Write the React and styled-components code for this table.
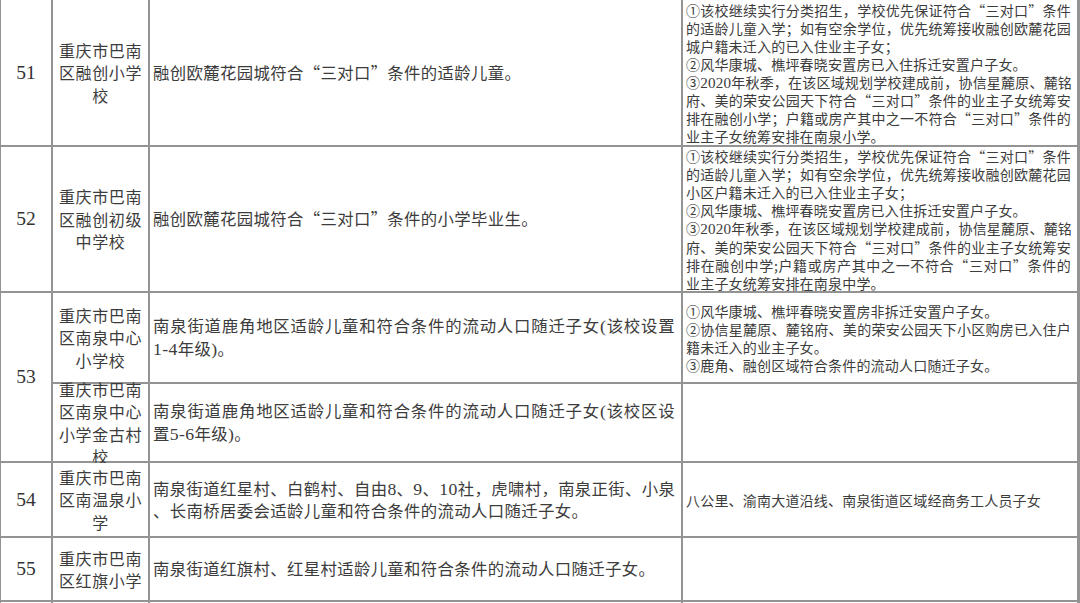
import React from "react";
import styled, { createGlobalStyle } from "styled-components";

const GlobalStyle = createGlobalStyle`
  html, body {
    margin: 0;
    padding: 0;
    background: #fff;
    overflow: hidden;
  }
  body {
    font-family: "Noto Sans CJK SC", "Liberation Serif", sans-serif;
    color: #3c3c3c;
  }
`;

const rows = [
  {
    no: "51",
    school: "重庆市巴南区融创小学校",
    area: [{ t: "融创欧麓花园城符合“三对口”条件的适龄儿童。" }],
    note: [
      { t: "①该校继续实行分类招生，学校优先保证符合“三对口”条件", j: true },
      { t: "的适龄儿童入学；如有空余学位，优先统筹接收融创欧麓花园", j: true },
      { t: "城户籍未迁入的已入住业主子女；" },
      { t: "②风华康城、樵坪春晓安置房已入住拆迁安置户子女。" },
      { t: "③2020年秋季，在该区域规划学校建成前，协信星麓原、麓铭", j: true },
      { t: "府、美的荣安公园天下符合“三对口”条件的业主子女统筹安", j: true },
      { t: "排在融创小学；户籍或房产其中之一不符合“三对口”条件的", j: true },
      { t: "业主子女统筹安排在南泉小学。" },
    ],
  },
  {
    no: "52",
    school: "重庆市巴南区融创初级中学校",
    area: [{ t: "融创欧麓花园城符合“三对口”条件的小学毕业生。" }],
    note: [
      { t: "①该校继续实行分类招生，学校优先保证符合“三对口”条件", j: true },
      { t: "的适龄儿童入学；如有空余学位，优先统筹接收融创欧麓花园", j: true },
      { t: "小区户籍未迁入的已入住业主子女；" },
      { t: "②风华康城、樵坪春晓安置房已入住拆迁安置户子女。" },
      { t: "③2020年秋季，在该区域规划学校建成前，协信星麓原、麓铭", j: true },
      { t: "府、美的荣安公园天下符合“三对口”条件的业主子女统筹安", j: true },
      { t: "排在融创中学;户籍或房产其中之一不符合“三对口”条件的", j: true },
      { t: "业主子女统筹安排在南泉中学。" },
    ],
  },
  {
    no: "53",
    span: 2,
    school: "重庆市巴南区南泉中心小学校",
    area: [
      { t: "南泉街道鹿角地区适龄儿童和符合条件的流动人口随迁子女(该校设置", j: true },
      { t: "1-4年级)。" },
    ],
    note: [
      { t: "①风华康城、樵坪春晓安置房非拆迁安置户子女。" },
      { t: "②协信星麓原、麓铭府、美的荣安公园天下小区购房已入住户", j: true },
      { t: "籍未迁入的业主子女。" },
      { t: "③鹿角、融创区域符合条件的流动人口随迁子女。" },
    ],
  },
  {
    school: "重庆市巴南区南泉中心小学金古村校",
    area: [
      { t: "南泉街道鹿角地区适龄儿童和符合条件的流动人口随迁子女(该校区设", j: true },
      { t: "置5-6年级)。" },
    ],
    note: [],
  },
  {
    no: "54",
    school: "重庆市巴南区南温泉小学",
    area: [
      { t: "南泉街道红星村、白鹤村、自由8、9、10社，虎啸村，南泉正街、小泉", j: true },
      { t: "、长南桥居委会适龄儿童和符合条件的流动人口随迁子女。" },
    ],
    note: [{ t: "八公里、渝南大道沿线、南泉街道区域经商务工人员子女" }],
  },
  {
    no: "55",
    school: "重庆市巴南区红旗小学",
    area: [{ t: "南泉街道红旗村、红星村适龄儿童和符合条件的流动人口随迁子女。" }],
    note: [],
  },
  {
    no: "56",
    school: "重庆市巴南区花溪小学校",
    area: [],
    note: [],
    top: true,
  },
];

// latin runs (digits, hyphens, brackets) get the serif face like the print
function rich(str) {
  return str.split(/([0-9\-()]+)/).map((part, i) =>
    /^[0-9\-()]+$/.test(part) ? <Latin key={i}>{part}</Latin> : part
  );
}

export default function App() {
  return (
    <>
      <GlobalStyle />
      <Sheet>
        {rows.map((r, i) => (
          <React.Fragment key={i}>
            {r.no && <NumCell $span={r.span}>{r.no}</NumCell>}
            <SchoolCell $top={r.top}>{r.school}</SchoolCell>
            <AreaCell>
              {r.area.map((l, k) => (
                <Line key={k} $full={l.j}>{rich(l.t)}</Line>
              ))}
            </AreaCell>
            <NoteCell>
              {r.note.map((l, k) => (
                <Line key={k} $full={l.j}>{rich(l.t)}</Line>
              ))}
            </NoteCell>
          </React.Fragment>
        ))}
      </Sheet>
    </>
  );
}

const Sheet = styled.div`
  width: 1080px;
  height: 603px;
  box-sizing: border-box;
  overflow: hidden;
  display: grid;
  grid-template-columns: 50px 95px 531px 394px;
  grid-template-rows: 145px 144px 89px 77px 73px 62px 90px;
  gap: 2px;
  padding: 0 3px 0 1px;
  background: #939393;
`;

const Cell = styled.div`
  background: #fff;
  display: flex;
  flex-direction: column;
  justify-content: center;
  min-height: 0;
  min-width: 0;
`;

const NumCell = styled(Cell)`
  grid-row: span ${(p) => p.$span || 1};
  align-items: center;
  font-family: "Liberation Serif", serif;
  font-size: 19.5px;
  color: #333;
`;

const SchoolCell = styled(Cell)`
  justify-content: ${(p) => (p.$top ? "flex-start" : "center")};
  padding: ${(p) => (p.$top ? "1px 4px 0" : "0 4px")};
  text-align: center;
  font-size: 16px;
  line-height: 22.5px;
  letter-spacing: 0.6px;
`;

const AreaCell = styled(Cell)`
  padding: 0 6px 0 3px;
  font-size: 16.4px;
  line-height: 21.5px;
  letter-spacing: 0.35px;
`;

const NoteCell = styled(Cell)`
  padding: 3px 6px 0 3px;
  font-size: 14px;
  line-height: 17.9px;
  letter-spacing: 0.2px;
`;

const Line = styled.div`
  white-space: nowrap;
  text-align: justify;
  text-align-last: ${(p) => (p.$full ? "justify" : "left")};
`;

const Latin = styled.span`
  font-family: "Liberation Serif", serif;
  font-size: 1.08em;
`;
